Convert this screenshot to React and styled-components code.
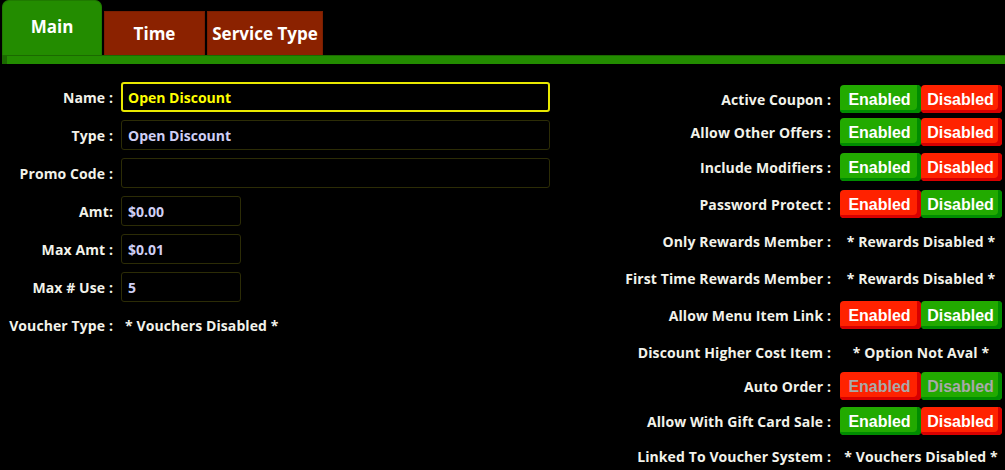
import React from "react";
import styled, { createGlobalStyle } from "styled-components";

const GlobalStyle = createGlobalStyle`
    body {
        margin: 0;
        background: #000;
        font-family: "Open Sans", "DejaVu Sans", sans-serif;
    }
`;

const leftFields = [
    { label: "Name :", value: "Open Discount", wide: true, focus: true },
    { label: "Type :", value: "Open Discount", wide: true },
    { label: "Promo Code :", value: "", wide: true },
    { label: "Amt:", value: "$0.00" },
    { label: "Max Amt :", value: "$0.01" },
    { label: "Max # Use :", value: "5" },
];

// on = which half is green; dim = greyed text
const options = [
    { label: "Active Coupon :", on: "enabled", mt: 0 },
    { label: "Allow Other Offers :", on: "enabled", mt: 5 },
    { label: "Include Modifiers :", on: "enabled", mt: 7 },
    { label: "Password Protect :", on: "disabled", mt: 9 },
    { label: "Only Rewards Member :", note: "* Rewards Disabled *", mt: 9 },
    { label: "First Time Rewards Member :", note: "* Rewards Disabled *", mt: 9 },
    { label: "Allow Menu Item Link :", on: "disabled", mt: 9 },
    { label: "Discount Higher Cost Item :", note: "* Option Not Aval *", mt: 9 },
    { label: "Auto Order :", on: "disabled", dim: true, mt: 6 },
    { label: "Allow With Gift Card Sale :", on: "enabled", mt: 7 },
    { label: "Linked To Voucher System :", note: "* Vouchers Disabled *", mt: 7 },
];

const App = () => {
    return (
        <Screen>
            <GlobalStyle />
            <TabBar>
                <Tab $active>Main</Tab>
                <Tab>Time</Tab>
                <Tab $wide>Service Type</Tab>
            </TabBar>
            <Rule />
            <Body>
                <Form>
                    {leftFields.map((f) => (
                        <FieldRow key={f.label}>
                            <Label>{f.label}</Label>
                            <Input $wide={f.wide} $focus={f.focus}>
                                {f.value}
                            </Input>
                        </FieldRow>
                    ))}
                    <FieldRow>
                        <Label>Voucher Type :</Label>
                        <Note>* Vouchers Disabled *</Note>
                    </FieldRow>
                </Form>
                <Options>
                    {options.map((o) => (
                        <OptionRow key={o.label} $mt={o.mt}>
                            <OptionLabel>{o.label}</OptionLabel>
                            {o.note ? (
                                <OptionNote>{o.note}</OptionNote>
                            ) : (
                                <Toggle>
                                    <ToggleButton $green={o.on === "enabled"} $dim={o.dim}>
                                        Enabled
                                    </ToggleButton>
                                    <ToggleButton $green={o.on === "disabled"} $dim={o.dim}>
                                        Disabled
                                    </ToggleButton>
                                </Toggle>
                            )}
                        </OptionRow>
                    ))}
                </Options>
            </Body>
        </Screen>
    );
};

const Screen = styled.div`
    width: 1005px;
    height: 470px;
    overflow: hidden;
    background: #000;
    color: #f2f2ea;
`;

const TabBar = styled.div`
    display: flex;
    align-items: flex-end;
    gap: 2px;
    height: 55px;
    padding-left: 2px;
`;

const Tab = styled.div`
    display: flex;
    justify-content: center;
    align-items: ${(p) => (p.$active ? "flex-start" : "center")};
    box-sizing: border-box;
    width: ${(p) => (p.$active ? "100px" : p.$wide ? "116px" : "101px")};
    height: ${(p) => (p.$active ? "55px" : "44px")};
    padding-top: ${(p) => (p.$active ? "14px" : "0")};
    background: ${(p) => (p.$active ? "#238c00" : "#8b2200")};
    border: 1px solid ${(p) => (p.$active ? "#1f7a00" : "#7a1e00")};
    border-bottom: none;
    border-radius: ${(p) => (p.$active ? "7px 7px 0 0" : "0")};
    color: #fff;
    font-size: 17px;
    font-weight: 700;
`;

const Rule = styled.div`
    height: 8px;
    margin-left: 2px;
    background: #238c00;
    border-top: 1px solid #1b6a00;
    border-left: 5px solid #1b6a00;
`;

const Body = styled.div`
    display: flex;
    justify-content: space-between;
`;

const Form = styled.div`
    display: flex;
    flex-direction: column;
    gap: 8px;
    padding-top: 18px;
`;

const FieldRow = styled.div`
    display: flex;
    align-items: center;
    gap: 8px;
    height: 30px;
`;

const Label = styled.div`
    width: 113px;
    text-align: right;
    font-size: 14px;
    font-weight: 700;
    letter-spacing: 0.1px;
    white-space: nowrap;
`;

const Input = styled.div`
    box-sizing: border-box;
    display: flex;
    align-items: center;
    width: ${(p) => (p.$wide ? "429px" : "120px")};
    height: 30px;
    padding-left: ${(p) => (p.$focus ? "5px" : "6px")};
    border: ${(p) => (p.$focus ? "2px solid #e8e800" : "1px solid #2c2c06")};
    border-radius: 3px;
    color: ${(p) => (p.$focus ? "#ffff00" : "#cfcff5")};
    font-size: 14px;
    font-weight: 700;
`;

const Note = styled.div`
    padding-left: 4px;
    font-size: 14px;
    font-weight: 700;
    letter-spacing: 0.1px;
`;

const Options = styled.div`
    display: flex;
    flex-direction: column;
    padding-top: 21px;
    padding-right: 3px;
`;

const OptionRow = styled.div`
    display: grid;
    grid-template-columns: auto 162px;
    justify-content: end;
    align-items: center;
    column-gap: 9px;
    height: 28px;
    margin-top: ${(p) => p.$mt}px;
`;

const OptionLabel = styled.div`
    text-align: right;
    font-size: 14px;
    font-weight: 700;
    letter-spacing: 0.1px;
    white-space: nowrap;
`;

const OptionNote = styled.div`
    text-align: center;
    font-size: 14px;
    font-weight: 700;
    letter-spacing: 0.1px;
    white-space: nowrap;
`;

const Toggle = styled.div`
    display: flex;
`;

const ToggleButton = styled.div`
    display: flex;
    align-items: center;
    justify-content: center;
    box-sizing: border-box;
    width: 81px;
    height: 28px;
    padding: 1px 2px 0 0;
    border-radius: 4px;
    background: ${(p) => (p.$green ? "#22aa00" : "#ff2200")};
    box-shadow: inset -4px -3px 0 ${(p) => (p.$green ? "#008c00" : "#d80000")};
    color: ${(p) => (p.$dim ? "#a9a9a9" : "#fff")};
    font-family: "Liberation Sans", Arial, sans-serif;
    font-size: 16px;
    font-weight: 700;
`;

export default App;
